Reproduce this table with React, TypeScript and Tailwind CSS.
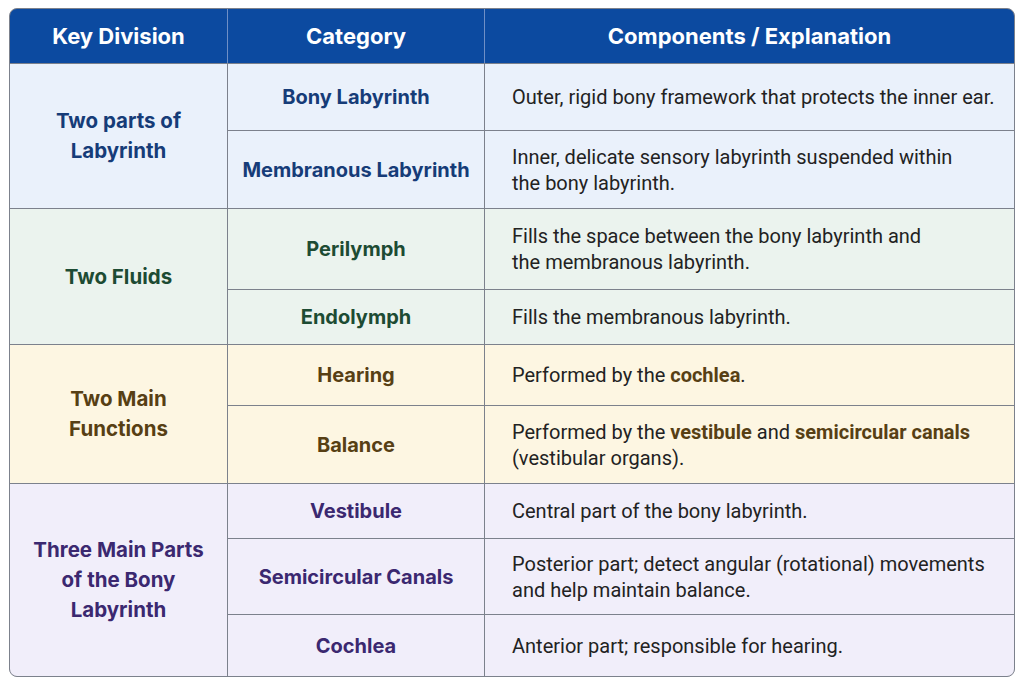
import React from "react"

type Row = { cat: string; text: React.ReactNode; h: string }
type Section = { key: React.ReactNode; bg: string; fg: string; rows: Row[] }

const sections: Section[] = [
  {
    key: (
      <>
        Two parts of
        <br />
        Labyrinth
      </>
    ),
    bg: "bg-[#eaf1fb]",
    fg: "text-[#163c78]",
    rows: [
      { cat: "Bony Labyrinth", text: "Outer, rigid bony framework that protects the inner ear.", h: "h-[66px]" },
      {
        cat: "Membranous Labyrinth",
        text: (
          <>
            Inner, delicate sensory labyrinth suspended within
            <br />
            the bony labyrinth.
          </>
        ),
        h: "h-[77px]",
      },
    ],
  },
  {
    key: "Two Fluids",
    bg: "bg-[#ebf3ee]",
    fg: "text-[#1d4b33]",
    rows: [
      {
        cat: "Perilymph",
        text: (
          <>
            Fills the space between the bony labyrinth and
            <br />
            the membranous labyrinth.
          </>
        ),
        h: "h-[80px]",
      },
      { cat: "Endolymph", text: "Fills the membranous labyrinth.", h: "h-[54px]" },
    ],
  },
  {
    key: (
      <>
        Two Main
        <br />
        Functions
      </>
    ),
    bg: "bg-[#fdf6e2]",
    fg: "text-[#573f14]",
    rows: [
      {
        cat: "Hearing",
        text: (
          <>
            Performed by the <b className="font-bold text-[#573f14]">cochlea</b>.
          </>
        ),
        h: "h-[60px]",
      },
      {
        cat: "Balance",
        text: (
          <>
            Performed by the <b className="font-bold text-[#573f14]">vestibule</b> and{" "}
            <b className="font-bold text-[#573f14]">semicircular canals</b>
            <br />
            (vestibular organs).
          </>
        ),
        h: "h-[77px]",
      },
    ],
  },
  {
    key: (
      <>
        Three Main Parts
        <br />
        of the Bony
        <br />
        Labyrinth
      </>
    ),
    bg: "bg-[#f1eefa]",
    fg: "text-[#3b2870]",
    rows: [
      { cat: "Vestibule", text: "Central part of the bony labyrinth.", h: "h-[54px]" },
      {
        cat: "Semicircular Canals",
        text: (
          <>
            Posterior part; detect angular (rotational) movements
            <br />
            and help maintain balance.
          </>
        ),
        h: "h-[75px]",
      },
      { cat: "Cochlea", text: "Anterior part; responsible for hearing.", h: "h-[61px]" },
    ],
  },
]

const head = "font-['Inter',sans-serif] font-bold"
const body = "font-['Roboto',sans-serif]"

export default function App() {
  return (
    <div className="w-[1024px] h-[683px] bg-white pt-[8px] pl-[9px]">
      <div className="w-[1006px] rounded-[8px] overflow-hidden border border-[#7c818c] bg-[#7c818c]">
        <div className={`grid grid-cols-[217px_257px_1fr] h-[54px] bg-[#0c4aa0] text-white text-[22px] ${head}`}>
          <div className="flex items-center justify-center">Key Division</div>
          <div className="flex items-center justify-center border-l border-[#6f8fc6]">Category</div>
          <div className="flex items-center justify-center border-l border-[#6f8fc6]">Components / Explanation</div>
        </div>
        {sections.map((s, i) => (
          <div key={i} className="grid grid-cols-[217px_256px_1fr] gap-px mt-px">
            <div
              className={`${s.bg} ${s.fg} ${head} text-[20.5px] leading-[30px] flex items-center justify-center text-center`}
              style={{ gridRow: `span ${s.rows.length}` }}
            >
              <div>{s.key}</div>
            </div>
            {s.rows.map((r, j) => (
              <React.Fragment key={j}>
                <div className={`${s.bg} ${s.fg} ${head} ${r.h} text-[20px] flex items-center justify-center`}>
                  {r.cat}
                </div>
                <div className={`${s.bg} ${body} ${r.h} text-[20px] leading-[26px] text-[#222] flex items-center pl-[27px]`}>
                  <div>{r.text}</div>
                </div>
              </React.Fragment>
            ))}
          </div>
        ))}
      </div>
    </div>
  )
}
